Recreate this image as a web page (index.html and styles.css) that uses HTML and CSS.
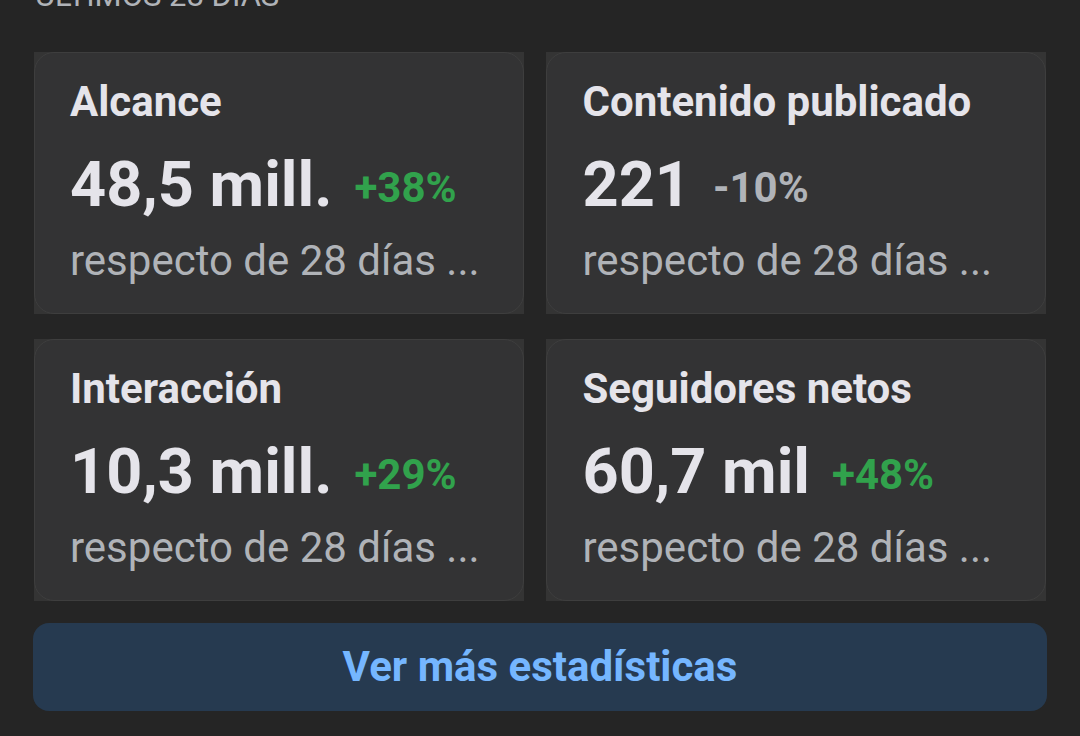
FILE: index.html
```html
<!DOCTYPE html>
<html lang="es">
<head>
<meta charset="utf-8">
<meta name="viewport" content="width=device-width, initial-scale=1">
<title>Estadísticas</title>
<link rel="stylesheet" href="styles.css">
</head>
<body>
<main class="insights">
  <h1 class="period">ÚLTIMOS 28 DÍAS</h1>
  <section class="cards">
    <div class="tile"><article class="card">
      <h2 class="title">Alcance</h2>
      <p class="figures"><span class="value">48,5 mill.</span><span class="change up">+38%</span></p>
      <p class="note">respecto de 28 días ...</p>
    </article></div>
    <div class="tile"><article class="card">
      <h2 class="title">Contenido publicado</h2>
      <p class="figures"><span class="value">221</span><span class="change">-10%</span></p>
      <p class="note">respecto de 28 días ...</p>
    </article></div>
    <div class="tile"><article class="card">
      <h2 class="title">Interacción</h2>
      <p class="figures"><span class="value">10,3 mill.</span><span class="change up">+29%</span></p>
      <p class="note">respecto de 28 días ...</p>
    </article></div>
    <div class="tile"><article class="card">
      <h2 class="title">Seguidores netos</h2>
      <p class="figures"><span class="value">60,7 mil</span><span class="change up">+48%</span></p>
      <p class="note">respecto de 28 días ...</p>
    </article></div>
  </section>
  <button class="more" type="button">Ver más estadísticas</button>
</main>
</body>
</html>
```
FILE: styles.css
```css
* { box-sizing: border-box; }
body {
  margin: 0;
  background: #252525;
  color: #e5e4ea;
  font-family: Roboto, "Liberation Sans", sans-serif;
}
.insights { padding: 0 33px 24px; }
.period {
  margin: -22px 0 38px;
  padding-left: 2px;
  color: #b0b3b8;
  font-size: 31px;
  font-weight: 400;
  line-height: 36px;
}
.cards {
  display: grid;
  grid-template-columns: 490fr 499fr;
  gap: 25px 22px;
  padding: 0 1px;
}
.tile { background: #343434; }
.card {
  padding: 26px 35px 28px;
  background: #333334;
  border: 1px solid #3e3e3e;
  border-radius: 20px;
}
.title { margin: 0; font-size: 42px; font-weight: 700; line-height: 46px; }
.figures {
  display: flex;
  align-items: flex-end;
  gap: 22px;
  margin: 28px 0 20px;
}
.value { font-size: 63px; font-weight: 700; line-height: 64px; }
.change { color: #b0b3b8; font-size: 42px; font-weight: 700; line-height: 58px; }
.up { color: #31a24c; }
.note { margin: 0; color: #b0b3b8; font-size: 42px; line-height: 48px; }
.more {
  display: block;
  width: 100%;
  margin-top: 22px;
  padding: 20px;
  border: 0;
  border-radius: 16px;
  background: #263a50;
  color: #75b6ff;
  font: 700 42px/48px Roboto, "Liberation Sans", sans-serif;
}
```
